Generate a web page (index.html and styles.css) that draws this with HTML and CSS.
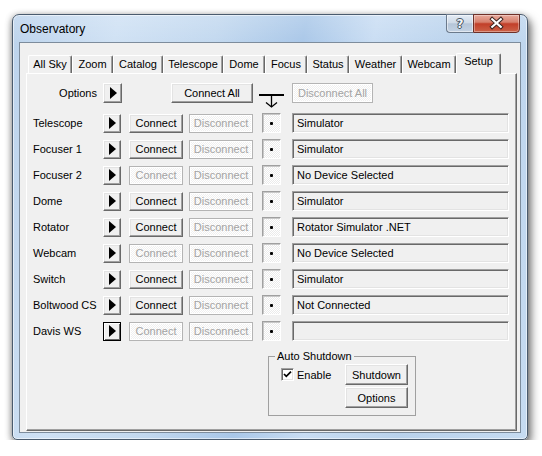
FILE: index.html
```html
<!DOCTYPE html>
<html>
<head>
<meta charset="utf-8">
<title>Observatory</title>
<link rel="stylesheet" href="styles.css">
</head>
<body>
<div class="window">
  <div class="titlebar">
    <span class="title">Observatory</span>
    <div class="caption">
      <div class="cbtn help"><span class="help-glyph">?</span></div>
      <div class="cbtn close">
        <svg width="47" height="17" viewBox="0 0 47 17">
          <path d="M19 4 L28 12 M28 4 L19 12" stroke="#3a2420" stroke-width="4.2" stroke-linecap="square" fill="none"/>
          <path d="M19 4 L28 12 M28 4 L19 12" stroke="#ffffff" stroke-width="2.2" stroke-linecap="square" fill="none"/>
        </svg>
      </div>
    </div>
  </div>
  <div class="client">
    <div class="tabs">
      <div class="tab t1">All Sky</div>
      <div class="tab t2">Zoom</div>
      <div class="tab t3">Catalog</div>
      <div class="tab t4">Telescope</div>
      <div class="tab t5">Dome</div>
      <div class="tab t6">Focus</div>
      <div class="tab t7">Status</div>
      <div class="tab t8">Weather</div>
      <div class="tab t9">Webcam</div>
      <div class="tab t10 active">Setup</div>
    </div>
    <div class="panel">
      <div class="row options">
        <div class="label">Options</div>
        <div class="btn arrow big"><span class="tri"></span></div>
        <div class="btn connect-all">Connect All</div>
        <svg class="tee" width="25" height="20" viewBox="0 0 25 20">
          <path d="M0 12 H25" stroke="#000" stroke-width="2" fill="none"/>
          <path d="M12.5 12 V24" stroke="#000" stroke-width="1.3" fill="none"/>
          <path d="M7 19.5 L12.5 24 L18 19.5" stroke="#000" stroke-width="1.3" fill="none"/>
        </svg>
        <div class="btn disabled disconnect-all">Disconnect All</div>
      </div>

      <div class="row device first">
        <div class="label">Telescope</div>
        <div class="btn arrow"><span class="tri"></span></div>
        <div class="btn connect">Connect</div>
        <div class="btn disabled disconnect">Disconnect</div>
        <div class="dotbox"><span class="dot"></span></div>
        <div class="field">Simulator</div>
      </div>
      <div class="row device">
        <div class="label">Focuser 1</div>
        <div class="btn arrow"><span class="tri"></span></div>
        <div class="btn connect">Connect</div>
        <div class="btn disabled disconnect">Disconnect</div>
        <div class="dotbox"><span class="dot"></span></div>
        <div class="field">Simulator</div>
      </div>
      <div class="row device">
        <div class="label">Focuser 2</div>
        <div class="btn arrow"><span class="tri"></span></div>
        <div class="btn disabled connect">Connect</div>
        <div class="btn disabled disconnect">Disconnect</div>
        <div class="dotbox"><span class="dot"></span></div>
        <div class="field">No Device Selected</div>
      </div>
      <div class="row device">
        <div class="label">Dome</div>
        <div class="btn arrow"><span class="tri"></span></div>
        <div class="btn connect">Connect</div>
        <div class="btn disabled disconnect">Disconnect</div>
        <div class="dotbox"><span class="dot"></span></div>
        <div class="field">Simulator</div>
      </div>
      <div class="row device">
        <div class="label">Rotator</div>
        <div class="btn arrow"><span class="tri"></span></div>
        <div class="btn connect">Connect</div>
        <div class="btn disabled disconnect">Disconnect</div>
        <div class="dotbox"><span class="dot"></span></div>
        <div class="field">Rotator Simulator .NET</div>
      </div>
      <div class="row device">
        <div class="label">Webcam</div>
        <div class="btn arrow"><span class="tri"></span></div>
        <div class="btn disabled connect">Connect</div>
        <div class="btn disabled disconnect">Disconnect</div>
        <div class="dotbox"><span class="dot"></span></div>
        <div class="field">No Device Selected</div>
      </div>
      <div class="row device">
        <div class="label">Switch</div>
        <div class="btn arrow"><span class="tri"></span></div>
        <div class="btn connect">Connect</div>
        <div class="btn disabled disconnect">Disconnect</div>
        <div class="dotbox"><span class="dot"></span></div>
        <div class="field">Simulator</div>
      </div>
      <div class="row device">
        <div class="label">Boltwood CS</div>
        <div class="btn arrow"><span class="tri"></span></div>
        <div class="btn connect">Connect</div>
        <div class="btn disabled disconnect">Disconnect</div>
        <div class="dotbox"><span class="dot"></span></div>
        <div class="field">Not Connected</div>
      </div>
      <div class="row device">
        <div class="label">Davis WS</div>
        <div class="btn arrow focused"><span class="tri"></span></div>
        <div class="btn disabled connect">Connect</div>
        <div class="btn disabled disconnect">Disconnect</div>
        <div class="dotbox"><span class="dot"></span></div>
        <div class="field"></div>
      </div>

      <fieldset class="group">
        <legend>Auto Shutdown</legend>
        <div class="group-body">
          <div class="check-line">
            <span class="checkbox">
              <svg width="11" height="11" viewBox="0 0 11 11">
                <path d="M2 5 L4.3 7.4 L9 2.6" stroke="#000" stroke-width="1.7" fill="none"/>
              </svg>
            </span>
            <span class="check-text">Enable</span>
          </div>
          <div class="group-buttons">
            <div class="btn gbtn">Shutdown</div>
            <div class="btn gbtn">Options</div>
          </div>
        </div>
      </fieldset>
    </div>
  </div>
</div>
</body>
</html>
```
FILE: styles.css
```css
* { box-sizing: border-box; }

body {
  margin: 0;
  background: #ffffff;
  font-family: "Liberation Sans", Arial, sans-serif;
  font-size: 11px;
  color: #000;
}

.window {
  margin: 14px 0 0 12px;
  width: 516px;
  height: 426px;
  border: 1px solid #4a5b6e;
  border-radius: 7px 7px 5px 5px;
  background:
    linear-gradient(180deg, rgba(255,255,255,0.18), rgba(255,255,255,0) 30px),
    linear-gradient(100deg, #bcd3ec 0%, #cfe1f4 18%, #c2d8ef 35%, #a9c7e8 50%, #c9ddf3 62%, #b9d2ec 78%, #c6dbf1 100%);
  box-shadow: 3px 5px 10px rgba(0,0,0,0.55), -1px 1px 6px rgba(0,0,0,0.3), inset 0 0 0 1px rgba(255,255,255,0.55);
  display: flex;
  flex-direction: column;
}

.titlebar {
  height: 27px;
  display: flex;
  justify-content: space-between;
  align-items: flex-start;
  padding-left: 7px;
}

.title {
  font-size: 12px;
  line-height: 27px;
  color: #000;
  padding-top: 1px;
}

.caption {
  display: flex;
  margin-right: 7px;
  margin-top: -1px;
}

.cbtn {
  height: 19px;
  display: flex;
  align-items: center;
  justify-content: center;
}

.help {
  width: 27px;
  border: 1px solid #6b7a8c;
  border-right: none;
  border-radius: 0 0 0 4px;
  background: linear-gradient(180deg, #e4ecf5 0%, #cfdae7 45%, #b5c5d8 52%, #c3d2e3 100%);
  box-shadow: inset 0 0 0 1px rgba(255,255,255,0.5);
}

.help-glyph {
  font-family: "DejaVu Sans", sans-serif;
  font-weight: bold;
  font-size: 12px;
  color: #f4f6f9;
  text-shadow: 0 0 1px #2d3947, 1px 0 0 #4b5968, -1px 0 0 #4b5968, 0 1px 0 #4b5968, 0 -1px 0 #4b5968;
}

.close {
  width: 47px;
  border: 1px solid #6e3028;
  border-radius: 0 0 4px 0;
  background: linear-gradient(180deg, #e8aa9c 0%, #d7806d 42%, #c23f29 52%, #cc6248 100%);
  box-shadow: inset 0 0 0 1px rgba(255,255,255,0.35);
}

.client {
  flex: 1;
  margin: 0 6px 6px 6px;
  border: 1px solid #7d8c9c;
  background: #f0f0f0;
  padding: 10px 0 0 6px;
}

.tabs {
  display: flex;
  height: 20px;
  padding-left: 2px;
  position: relative;
  z-index: 1;
}

.tab {
  height: 18px;
  margin-top: 2px;
  border-top: 1px solid #ffffff;
  border-left: 1px solid #ffffff;
  border-right: 1px solid #696969;
  box-shadow: inset -1px 0 0 #a0a0a0;
  border-radius: 2px 2px 0 0;
  background: #f0f0f0;
  text-align: center;
  line-height: 16px;
  white-space: nowrap;
}

.tab.active {
  height: 21px;
  margin-top: 0;
  line-height: 15px;
}

.t1 { width: 44px; }
.t2 { width: 41px; }
.t3 { width: 50px; }
.t4 { width: 60px; }
.t5 { width: 42px; }
.t6 { width: 42px; }
.t7 { width: 42px; }
.t8 { width: 53px; }
.t9 { width: 54px; }
.t10 { width: 45px; }

.panel {
  width: 491px;
  height: 358px;
  border-top: 1px solid #ffffff;
  border-left: 1px solid #ffffff;
  border-right: 1px solid #696969;
  border-bottom: 1px solid #696969;
  box-shadow: inset -1px -1px 0 #a0a0a0;
  padding: 9px 0 0 6px;
  display: flex;
  flex-direction: column;
}

.row {
  display: flex;
  align-items: center;
  height: 20px;
  margin-top: 6px;
}

.row.options { margin-top: 0; }
.row.first { margin-top: 10px; }

.label {
  width: 70px;
  white-space: nowrap;
}

.options .label {
  text-align: right;
  padding-right: 6px;
}

.btn {
  display: flex;
  align-items: center;
  justify-content: center;
  height: 19px;
  background: #f0f0f0;
  border: 1px solid;
  border-color: #ffffff #696969 #696969 #ffffff;
  box-shadow: inset -1px -1px 0 #a0a0a0, inset 1px 1px 0 #e3e3e3;
  white-space: nowrap;
}

.btn.disabled {
  color: #a3a3a3;
  border-color: #b4b4b4;
  box-shadow: inset 1px 1px 0 #ffffff, inset -1px -1px 0 #ffffff;
  background-color: #f0f0f0;
  background-image: repeating-conic-gradient(#ffffff 0 25%, transparent 0 50%);
  background-size: 2px 2px;
}

.arrow {
  width: 18px;
  margin-right: 8px;
}

.arrow.big {
  width: 19px;
  height: 20px;
  margin-right: 0;
}

.arrow.focused {
  border-color: #000;
  box-shadow: inset 1px 1px 0 #ffffff, inset -1px -1px 0 #696969;
}

.tri {
  width: 0;
  height: 0;
  border-left: 7px solid #000;
  border-top: 6px solid transparent;
  border-bottom: 6px solid transparent;
  margin-left: 1px;
}

.connect-all {
  width: 82px;
  height: 20px;
  margin-left: 49px;
}

.tee {
  margin-left: 6px;
  overflow: visible;
}

.disconnect-all {
  width: 81px;
  height: 20px;
  margin-left: 8px;
}

.connect {
  width: 54px;
  margin-right: 6px;
}

.disconnect {
  width: 64px;
  margin-right: 9px;
}

.dotbox {
  width: 19px;
  height: 20px;
  margin-right: 11px;
  border: 1px solid;
  border-color: #a0a0a0 #ffffff #ffffff #a0a0a0;
  box-shadow: inset 1px 1px 0 #c8c8c8;
  background-color: #ebebeb;
  background-image: repeating-conic-gradient(#ffffff 0 25%, transparent 0 50%);
  background-size: 2px 2px;
  display: flex;
  align-items: center;
  justify-content: center;
}

.dot {
  width: 3px;
  height: 3px;
  background: #000;
  border-radius: 1px;
}

.field {
  width: 217px;
  height: 20px;
  border: 1px solid;
  border-color: #a0a0a0 #ffffff #ffffff #a0a0a0;
  box-shadow: inset 1px 1px 0 #696969, inset -1px -1px 0 #e3e3e3;
  background: #f0f0f0;
  padding-left: 4px;
  line-height: 18px;
  white-space: nowrap;
}

.group {
  width: 148px;
  margin: 9px 0 0 235px;
  padding: 1px 7px 7px 6px;
  border: 1px solid #a0a0a0;
  min-inline-size: 0;
}

.group legend {
  padding: 0 2px;
  line-height: 13px;
}

.group-body {
  display: flex;
  justify-content: space-between;
}

.check-line {
  display: flex;
  align-items: center;
  height: 21px;
  margin-left: 6px;
}

.checkbox {
  width: 13px;
  height: 13px;
  border: 1px solid;
  border-color: #a0a0a0 #ffffff #ffffff #a0a0a0;
  box-shadow: inset 1px 1px 0 #696969, inset -1px -1px 0 #e3e3e3;
  background: #ffffff;
  display: flex;
  align-items: center;
  justify-content: center;
  margin-right: 3px;
}

.group-buttons {
  display: flex;
  flex-direction: column;
  gap: 2px;
}

.gbtn {
  width: 63px;
  height: 21px;
}
```
